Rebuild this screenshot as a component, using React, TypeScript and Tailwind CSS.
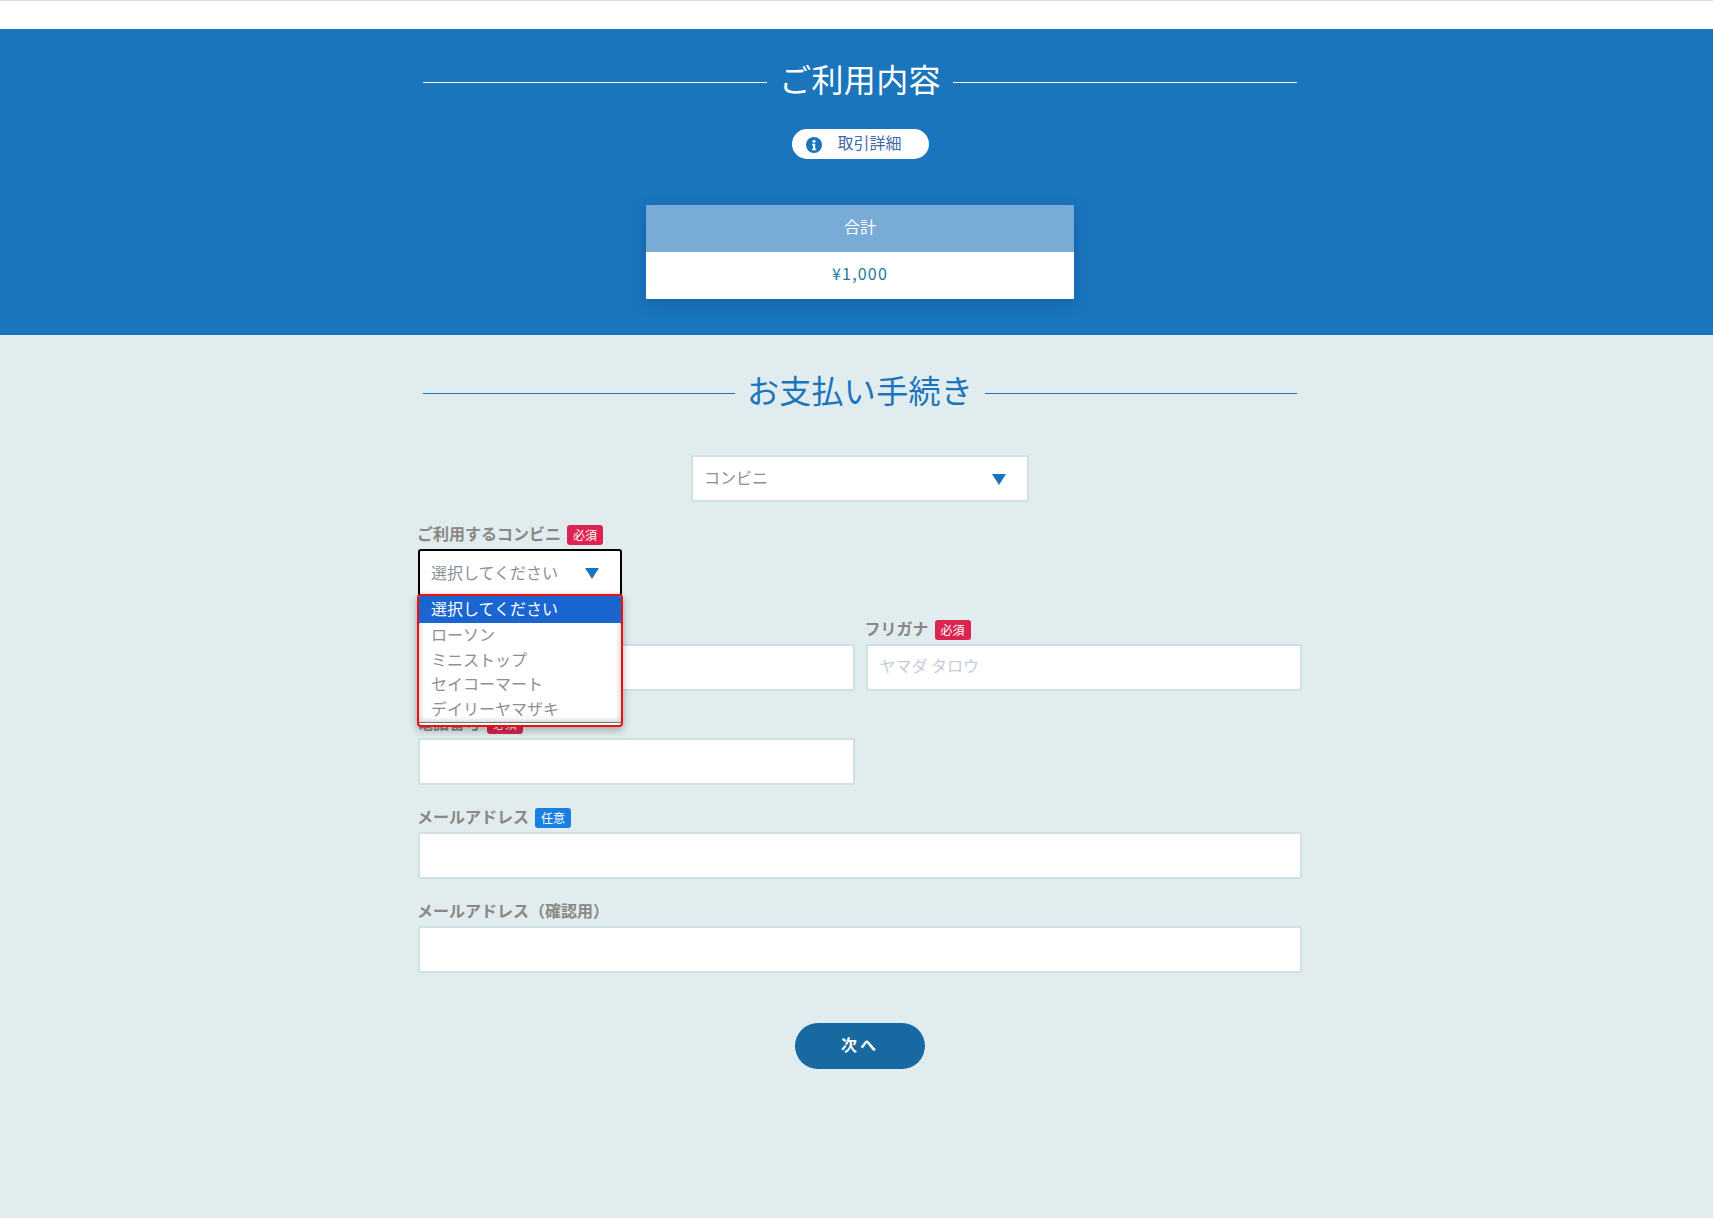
const font = { fontFamily: '"Noto Sans CJK JP", "Noto Sans", sans-serif' }

function Heading({ children, light }: { children: string; light?: boolean }) {
  const line = light ? "bg-white" : "bg-[#1a75bc]"
  return (
    <div className="flex w-[874px] items-center">
      <div className={`h-px flex-1 ${line}`}></div>
      <h2 className={`px-[12px] text-[32px] leading-[46px] font-normal tracking-[0.3px] -translate-y-[4px] ${light ? "text-white" : "text-[#1a75bc]"}`}>{children}</h2>
      <div className={`h-px flex-1 ${line}`}></div>
    </div>
  )
}

function Badge({ optional }: { optional?: boolean }) {
  return (
    <span className={`flex h-5 w-9 items-center justify-center rounded-[3px] text-xs leading-none font-normal text-white ${optional ? "bg-[#1a7fe0]" : "bg-[#dc2450]"}`}>
      {optional ? "任意" : "必須"}
    </span>
  )
}

function Label({ text, badge }: { text: string; badge?: "required" | "optional" }) {
  return (
    <div className="mb-1 flex h-5 items-center gap-[6px] text-base leading-5 font-bold text-[#8b8784]">
      <span className="-ml-px pb-1">{text}</span>
      {badge && <Badge optional={badge === "optional"} />}
    </div>
  )
}

function Field({ label, badge, placeholder }: { label: string; badge?: "required" | "optional"; placeholder?: string }) {
  return (
    <div>
      <Label text={label} badge={badge} />
      <input
        placeholder={placeholder}
        className="block h-[47px] w-full rounded-[3px] border-2 border-[#cfdfe4] bg-white px-3 pb-[6px] text-base outline-none placeholder:text-[#c5ccd8]"
      />
    </div>
  )
}

function Arrow() {
  return (
    <svg width="14" height="11" viewBox="0 0 14 11" className="shrink-0 translate-y-px">
      <path d="M0 0H14L7 11Z" fill="#1a75bc" />
    </svg>
  )
}

export default function App() {
  const options = ["ローソン", "ミニストップ", "セイコーマート", "デイリーヤマザキ"]

  return (
    <div className="min-h-[1218px] bg-[#e0ecee]" style={font}>
      <div className="h-[29px] border-t border-[#dddddd] bg-white"></div>

      {/* ご利用内容 */}
      <section className="flex h-[306px] flex-col items-center bg-[#1a75bc] pt-[30px] pl-[7px]">
        <Heading light>ご利用内容</Heading>
        <button className="mt-[24px] flex h-[30px] w-[137px] items-center rounded-full bg-white pl-[14px] text-base text-[#3f6aa6]">
          <svg width="16" height="16" viewBox="0 0 16 16" className="shrink-0 translate-y-px">
            <circle cx="8" cy="8" r="8" fill="#1a75bc" />
            <circle cx="8" cy="4.2" r="1.5" fill="#fff" />
            <path d="M6 6.8h3.2v5h1v1.5H6v-1.5h1v-3.5H6Z" fill="#fff" />
          </svg>
          <span className="ml-[16px] -translate-y-[2px]">取引詳細</span>
        </button>
        <div className="mt-[46px] w-[428px] shadow-[0_4px_12px_rgba(20,50,130,0.3)]">
          <div className="flex h-[47px] items-center justify-center bg-[#78abd6] pb-[5px] text-base text-white">合計</div>
          <div className="flex h-[47px] items-center justify-center bg-white pb-[5px] text-base tracking-[1.2px] text-[#1a7a9c]">¥1,000</div>
        </div>
      </section>

      {/* お支払い手続き */}
      <section className="flex flex-col items-center pt-[35px] pl-[7px]">
        <Heading>お支払い手続き</Heading>

        <div className="mt-[39px] flex h-[47px] w-[338px] items-center justify-between rounded-[3px] border-2 border-[#cfdfe4] bg-white pr-[21px] pl-[11px] text-base text-[#8a9099]">
          <span className="pb-1">コンビニ</span>
          <Arrow />
        </div>

        <div className="mt-[23px] flex w-[884px] flex-col gap-[23px]">
          <div className="relative z-10 mb-px w-[204px]">
            <div className="w-max">
              <Label text="ご利用するコンビニ" badge="required" />
            </div>
            <div className="mt-px flex h-[47px] items-center justify-between rounded-[3px] border-2 border-black bg-white pr-[21px] pl-[11px] text-base text-[#8a9099]">
              <span className="pb-[2px]">選択してください</span>
              <Arrow />
            </div>
            {/* open dropdown */}
            <div className="absolute top-[69px] -left-[1px] w-[206px] rounded-[4px] border-2 border-[#ee0f0f] bg-white text-base text-[#8a9099] shadow-[0_3px_8px_rgba(0,0,0,0.3)]">
              <div className="border-b border-[#777777] pb-[1px] shadow-[inset_0_0_6px_rgba(0,0,0,0.28)]">
                <div className="h-[27px] rounded-t-[2px] bg-[#1a66d0] pl-3 leading-[24px] text-white">選択してください</div>
                {options.map((o) => (
                  <div key={o} className="h-[24.6px] pl-3 leading-[22px]">{o}</div>
                ))}
              </div>
              <div className="h-[2px]"></div>
            </div>
          </div>

          <div className="grid grid-cols-2 gap-x-[11px]">
            <Field label="お名前" badge="required" />
            <Field label="フリガナ" badge="required" placeholder="ヤマダ タロウ" />
          </div>

          <div className="grid grid-cols-2 gap-x-[11px]">
            <Field label="電話番号" badge="required" />
          </div>

          <Field label="メールアドレス" badge="optional" />
          <Field label="メールアドレス（確認用）" />
        </div>

        <button className="mt-[50px] flex h-[46px] w-[130px] items-center justify-center rounded-full bg-[#1868a2] pb-1 text-base font-bold tracking-[3px] text-white">
          次へ
        </button>
      </section>
    </div>
  )
}
